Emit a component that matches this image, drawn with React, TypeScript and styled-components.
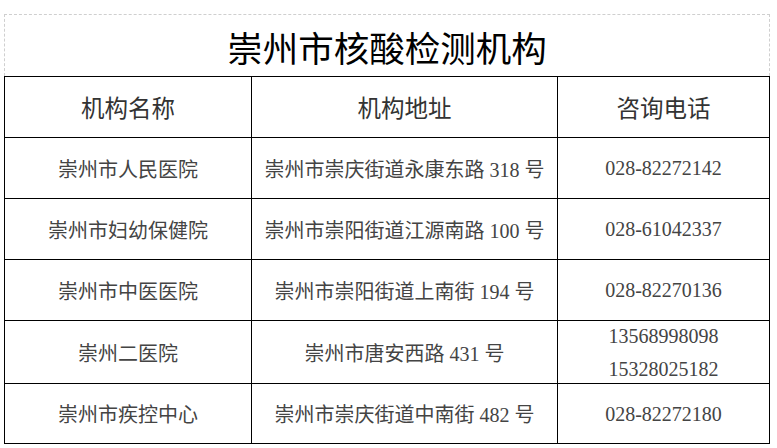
import styled, { createGlobalStyle } from 'styled-components';

const GlobalStyle = createGlobalStyle`
  html, body {
    margin: 0;
    padding: 0;
    background: #fff;
  }
  body {
    font-family: "Liberation Serif", "Noto Sans CJK SC", serif;
  }
`

const rows = [
  { name: '崇州市人民医院', address: '崇州市崇庆街道永康东路 318 号', phones: ['028-82272142'], height: 61 },
  { name: '崇州市妇幼保健院', address: '崇州市崇阳街道江源南路 100 号', phones: ['028-61042337'], height: 61 },
  { name: '崇州市中医医院', address: '崇州市崇阳街道上南街 194 号', phones: ['028-82270136'], height: 61 },
  { name: '崇州二医院', address: '崇州市唐安西路 431 号', phones: ['13568998098', '15328025182'], height: 63 },
  { name: '崇州市疾控中心', address: '崇州市崇庆街道中南街 482 号', phones: ['028-82272180'], height: 60 },
];

export default function App() {
  return (
    <Page>
      <GlobalStyle />
      <Sheet>
        <TitleBox>崇州市核酸检测机构</TitleBox>
        <Table>
          <colgroup>
            <col style={{ width: 247 }} />
            <col style={{ width: 306 }} />
            <col style={{ width: 212 }} />
          </colgroup>
          <thead>
            <Row $height={61}>
              <HeadCell>机构名称</HeadCell>
              <HeadCell>机构地址</HeadCell>
              <HeadCell>咨询电话</HeadCell>
            </Row>
          </thead>
          <tbody>
            {rows.map((r) => (
              <Row key={r.name} $height={r.height}>
                <Cell>{r.name}</Cell>
                <Cell>{r.address}</Cell>
                <Cell>
                  <Phones>
                    {r.phones.map((p) => (
                      <Phone key={p}>{p}</Phone>
                    ))}
                  </Phones>
                </Cell>
              </Row>
            ))}
          </tbody>
        </Table>
      </Sheet>
    </Page>
  );
}

const Page = styled.div`
  padding: 14px 0 0 4px;
`
const Sheet = styled.div`
  width: 766px;
  display: flex;
  flex-direction: column;
`
const TitleBox = styled.div`
  box-sizing: border-box;
  height: 62px;
  border: 1px dashed #cfcfcf;
  border-bottom: none;
  display: flex;
  align-items: center;
  justify-content: center;
  font-family: "Noto Sans CJK SC", sans-serif;
  font-size: 35.5px;
  color: #000;
  padding-top: 2px;
`
const Table = styled.table`
  width: 766px;
  table-layout: fixed;
  border-collapse: collapse;
`
const Row = styled.tr<{ $height: number }>`
  height: ${(p) => p.$height}px;
`
const HeadCell = styled.th`
  border: 1px solid #000;
  padding: 0;
  font-weight: 400;
  font-family: "Noto Sans CJK SC", sans-serif;
  font-size: 23.5px;
  color: #333;
  text-align: center;
  vertical-align: middle;
`
const Cell = styled.td`
  border: 1px solid #000;
  padding: 0;
  font-size: 20px;
  color: #444;
  text-align: center;
  vertical-align: middle;
  white-space: nowrap;
`
const Phones = styled.div`
  display: flex;
  flex-direction: column;
  align-items: center;
  gap: 11px;
`
const Phone = styled.div`
  line-height: 22px;
`
